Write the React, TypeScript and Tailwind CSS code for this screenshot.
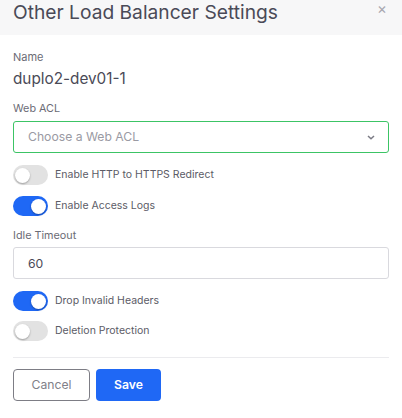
import { useState } from 'react'

function Toggle({ on, onChange, label }: { on: boolean; onChange: (v: boolean) => void; label: string }) {
    return (
        <label className="flex items-center gap-[7px] cursor-pointer">
            <button
                type="button"
                onClick={() => onChange(!on)}
                className={`relative w-[35px] h-[20px] rounded-full shrink-0 ${on ? 'bg-[#1f68f5]' : 'bg-[#e2e2e2]'}`}
            >
                <span
                    className={`absolute top-[2.5px] w-[15px] h-[15px] rounded-full bg-white shadow-[0_1px_2px_rgba(0,0,0,0.3)] ${on ? 'left-[18px]' : 'left-[2px]'}`}
                />
            </button>
            <span className="text-[10.5px] leading-[14px] text-[#5b5b66]">{label}</span>
        </label>
    )
}

export default function App() {
    const [httpsRedirect, setHttpsRedirect] = useState(false)
    const [accessLogs, setAccessLogs] = useState(true)
    const [dropHeaders, setDropHeaders] = useState(true)
    const [deletionProtection, setDeletionProtection] = useState(false)
    const [timeout, setTimeoutValue] = useState('60')

    return (
        <div className="w-[402px] h-[418px] bg-white font-['Inter',sans-serif] text-[#3b3b48]">
            {/* Header */}
            <div className="h-[35px] bg-[#f7f7f8] flex items-start justify-between pl-[13px] pr-[15px] pt-[0px]">
                <h2 className="text-[19.2px] leading-[24px] text-[#4a4a57]">Other Load Balancer Settings</h2>
                <button className="text-[#a8a8b0] text-[15px] leading-[18px]">×</button>
            </div>

            <div className="px-[13px] pt-[15px]">
                <div className="text-[11px] leading-[14px] text-[#6b6b75]">Name</div>
                <div className="text-[15.3px] leading-[20px] mt-[5px] text-[#4a4a57]">duplo2-dev01-1</div>

                <div className="text-[10.8px] leading-[14px] text-[#6b6b75] mt-[13px]">Web ACL</div>
                <div className="mt-[5px] h-[32px] border border-[#3cc465] rounded-[3px] flex items-center justify-between pl-[14px] pr-[13px]">
                    <span className="text-[12.2px] text-[#9a9aa3]">Choose a Web ACL</span>
                    <svg width="8" height="5" viewBox="0 0 8 5" fill="none">
                        <path d="M1 1l3 2.8L7 1" stroke="#7b7b85" strokeWidth="1.5" />
                    </svg>
                </div>

                <div className="mt-[12px] flex flex-col gap-[11px]">
                    <Toggle on={httpsRedirect} onChange={setHttpsRedirect} label="Enable HTTP to HTTPS Redirect" />
                    <Toggle on={accessLogs} onChange={setAccessLogs} label="Enable Access Logs" />
                </div>

                <div className="text-[10.8px] leading-[14px] text-[#6b6b75] mt-[13px]">Idle Timeout</div>
                <input
                    value={timeout}
                    onChange={e => setTimeoutValue(e.target.value)}
                    className="block mt-[4px] w-full h-[32px] border border-[#d9d9de] rounded-[3px] px-[14px] text-[12.2px] text-[#4a4a57] outline-none"
                />

                <div className="mt-[12px] flex flex-col gap-[10px]">
                    <Toggle on={dropHeaders} onChange={setDropHeaders} label="Drop Invalid Headers" />
                    <Toggle on={deletionProtection} onChange={setDeletionProtection} label="Deletion Protection" />
                </div>

                <div className="mt-[16px] border-t border-[#ebebee]" />

                <div className="mt-[11px] flex gap-[6px]">
                    <button className="w-[77px] h-[32px] border border-[#7d7d85] rounded-[4px] text-[12.2px] text-[#808088]">Cancel</button>
                    <button className="w-[65px] h-[32px] bg-[#1f68f5] rounded-[4px] text-[12.2px] font-semibold text-white">Save</button>
                </div>
            </div>
        </div>
    )
}
